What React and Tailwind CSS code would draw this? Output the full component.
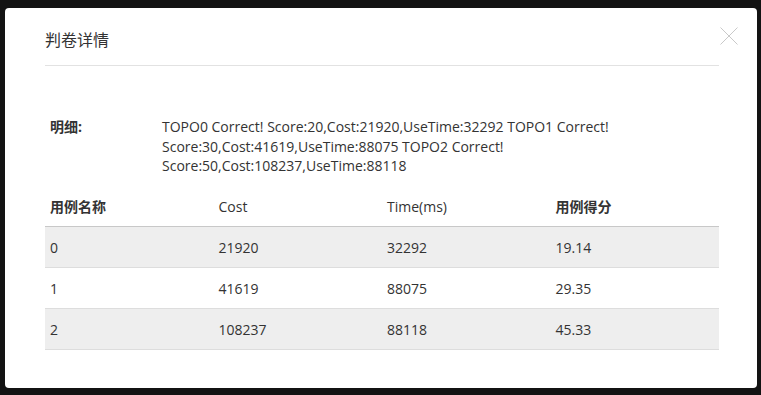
import React from "react";

const rows = [
  ["0", "21920", "32292", "19.14"],
  ["1", "41619", "88075", "29.35"],
  ["2", "108237", "88118", "45.33"],
];

export default function App() {
  return (
    <div
      className="w-[761px] h-[395px] bg-[#131313] pt-[8px] pl-[5px] overflow-hidden"
      style={{ fontFamily: '"Open Sans", "Noto Sans CJK SC", sans-serif' }}
    >
      <div className="relative w-[752px] h-[380px] bg-white rounded-[4px] pl-[40px] pr-[38px] text-[#333]">
        <div className="pt-[21px] pb-[14px] border-b border-[#e2e2e2]">
          <div className="text-[16px] leading-[22px]">判卷详情</div>
        </div>
        <button className="absolute left-[715px] top-[19px] w-[18px] h-[18px]">
          <svg width="18" height="18" viewBox="0 0 18 18">
            <path d="M0.5 0.5 L17.5 17.5 M17.5 0.5 L0.5 17.5" stroke="#c9c9c9" strokeWidth="1" fill="none" />
          </svg>
        </button>
        <div className="mt-[51px] flex text-[14px] leading-[19.5px]">
          <div className="w-[117px] shrink-0 pl-[5px] font-bold text-[14px] text-[#333]">明细:</div>
          <div className="flex-1">
            TOPO0 Correct! Score:20,Cost:21920,UseTime:32292 TOPO1 Correct! Score:30,Cost:41619,UseTime:88075 TOPO2 Correct! Score:50,Cost:108237,UseTime:88118
          </div>
        </div>
        <table className="mt-[12px] w-full table-fixed border-collapse text-[14px]">
          <thead>
            <tr className="h-[39px] border-b border-[#c8c8c8]">
              <th className="text-left font-bold pl-[5px]">用例名称</th>
              <th className="text-left font-normal pl-[5px]">Cost</th>
              <th className="text-left font-normal pl-[5px]">Time(ms)</th>
              <th className="text-left font-bold pl-[5px]">用例得分</th>
            </tr>
          </thead>
          <tbody>
            {rows.map((r, i) => (
              <tr key={i} className={`h-[41px] border-b border-[#dddddd] ${i % 2 === 0 ? "bg-[#eeeeee]" : "bg-white"}`}>
                {r.map((c, j) => (
                  <td key={j} className="pl-[5px]">{c}</td>
                ))}
              </tr>
            ))}
          </tbody>
        </table>
      </div>
    </div>
  );
}
